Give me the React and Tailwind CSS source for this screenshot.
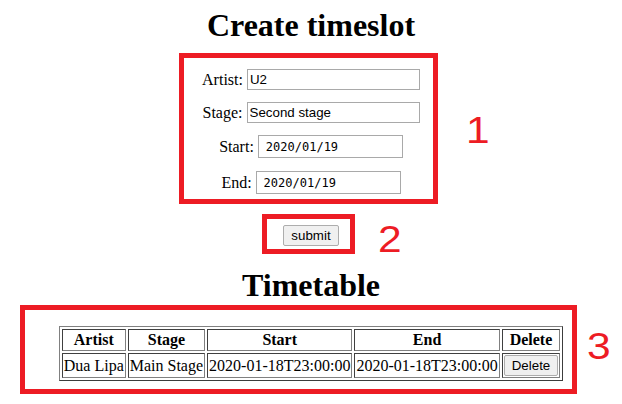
const cell =
  'border border-t-[#404040] border-l-[#404040] border-b-[#808080] border-r-[#808080] p-[1px] whitespace-nowrap';

const btn =
  "border border-[#adadad] bg-[#f0f0f0] rounded-[2px] px-[7px] py-[2px] text-[13.33px] leading-[15px] font-['Liberation_Sans',sans-serif] text-black";

function Row({ label, value, date, className }) {
  return (
    <div className={'flex items-center gap-[4px] ' + (className || '')}>
      <label className="text-[16px] leading-[18px]">{label}</label>
      <input
        readOnly
        value={value}
        className={
          date
            ? "h-[23px] w-[145px] border border-[#a9a9a9] pl-[7px] text-[12px] font-['DejaVu_Sans_Mono',monospace] text-black outline-none"
            : "h-[21px] w-[173px] border border-[#a9a9a9] px-[2px] text-[13.33px] font-['Liberation_Sans',sans-serif] text-black outline-none"
        }
      />
    </div>
  );
}

const rows = [
  { artist: 'Dua Lipa', stage: 'Main Stage', start: '2020-01-18T23:00:00', end: '2020-01-18T23:00:00' },
];

export default function App() {
  return (
    <div className="relative w-[622px] h-[404px] overflow-hidden bg-white text-black font-['Liberation_Serif',serif]">
      <h1 className="pt-[7px] text-center text-[32px] leading-[37px] font-bold">Create timeslot</h1>

      <form className="flex flex-col items-center mt-[25px]" onSubmit={e => e.preventDefault()}>
        <Row label="Artist:" value="U2" />
        <Row label="Stage:" value="Second stage" className="mt-[12px]" />
        <Row label="Start:" value="2020/01/19" date className="mt-[12px]" />
        <Row label="End:" value="2020/01/19" date className="mt-[13px]" />
        <button type="submit" className={btn + ' mt-[31px] h-[21px]'}>submit</button>
      </form>

      <h1 className="mt-[21px] text-center text-[32px] leading-[37px] font-bold">Timetable</h1>

      <table className="mx-auto mt-[22px] border-separate border-spacing-[2px] border border-t-[#808080] border-l-[#808080] border-b-[#3c3c3c] border-r-[#3c3c3c] text-[16px] leading-[18px]">
        <thead>
          <tr>
            {['Artist', 'Stage', 'Start', 'End', 'Delete'].map(h => (
              <th key={h} className={cell + ' font-bold text-center'}>{h}</th>
            ))}
          </tr>
        </thead>
        <tbody>
          {rows.map(r => (
            <tr key={r.artist}>
              <td className={cell}>{r.artist}</td>
              <td className={cell}>{r.stage}</td>
              <td className={cell}>{r.start}</td>
              <td className={cell}>{r.end}</td>
              <td className={cell}>
                <button className={btn + ' h-[21px]'}>Delete</button>
              </td>
            </tr>
          ))}
        </tbody>
      </table>

      {/* annotation overlay */}
      <div className="absolute left-[179px] top-[53px] w-[259px] h-[151px] border-[5px] border-[#ed1c24]" />
      <div className="absolute left-[262px] top-[214px] w-[93px] h-[40px] border-[5px] border-[#ed1c24]" />
      <div className="absolute left-[20px] top-[305px] w-[557px] h-[89px] border-[5px] border-[#ed1c24]" />
      <span className="absolute left-[466px] top-[112px] origin-left scale-x-[1.15] text-[37px] leading-none text-[#ed1c24] font-['Liberation_Sans',sans-serif]">1</span>
      <span className="absolute left-[378px] top-[221px] origin-left scale-x-[1.15] text-[37px] leading-none text-[#ed1c24] font-['Liberation_Sans',sans-serif]">2</span>
      <span className="absolute left-[587px] top-[328px] origin-left scale-x-[1.15] text-[37px] leading-none text-[#ed1c24] font-['Liberation_Sans',sans-serif]">3</span>
    </div>
  );
}
